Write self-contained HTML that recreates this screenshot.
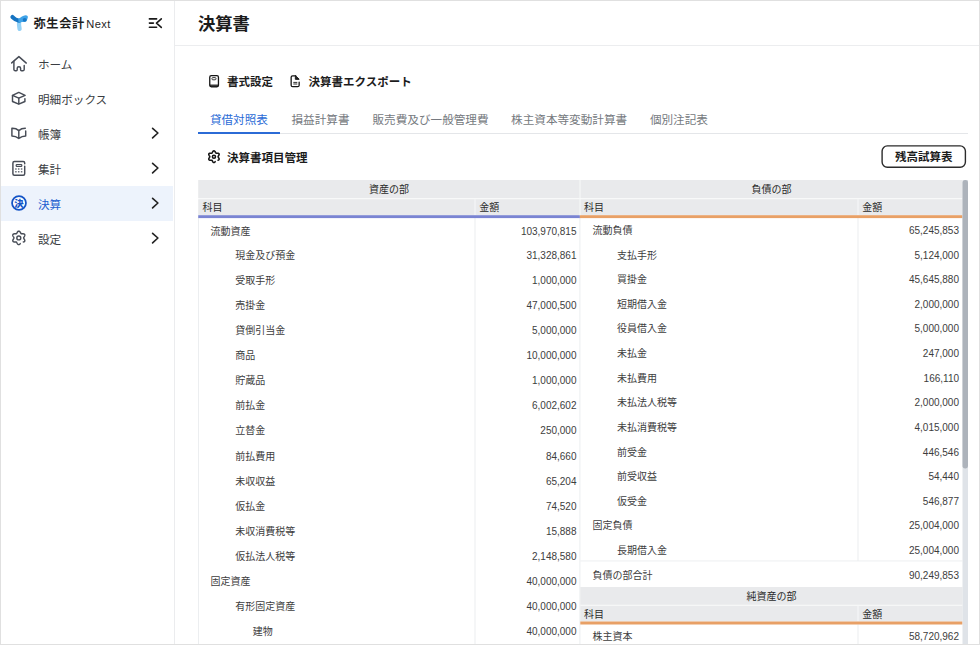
<!DOCTYPE html>
<html lang="ja">
<head>
<meta charset="utf-8">
<title>決算書</title>
<style>
*{box-sizing:border-box;margin:0;padding:0}
html,body{width:980px;height:645px;overflow:hidden;background:#fff}
body{font-family:"Liberation Sans","Noto Sans CJK JP",sans-serif;color:#333;position:relative;font-size:10px}
#frame{position:absolute;left:0;top:0;width:980px;height:645px;border:1px solid #e0e0e0;z-index:50;pointer-events:none}
#side{position:absolute;left:0;top:0;width:175px;height:645px;border-right:1px solid #ebecee;background:#fff}
#logo{position:absolute;left:6px;top:10px;width:28px;height:26px}
#brand{position:absolute;left:33.4px;top:15.2px;font-size:12.2px;font-weight:700;color:#1f1f1f;line-height:18px;white-space:nowrap;letter-spacing:.7px}
#brand span{font-size:11.1px;font-weight:400;letter-spacing:.5px;margin-left:1.2px}
#collapse{position:absolute;left:140px;top:8px;width:30px;height:30px}
.navon{position:absolute;left:1px;top:186px;width:172px;height:34.5px;background:#edf3fc}
.lbl{position:absolute;left:38px;height:18px;line-height:18px;font-size:11.6px;color:#3a3d42;white-space:nowrap}
.lbl.on{color:#1c5fd0}
svg.ic{position:absolute;left:6px;width:28px;height:28px}
svg.ch{position:absolute;left:150px;width:10px;height:14px}
#hdr{position:absolute;left:175px;top:0;width:805px;height:46px;border-bottom:1px solid #ecedef;background:#fff}
#hdr h1{position:absolute;left:23px;top:10.5px;font-size:17.3px;line-height:26px;font-weight:700;color:#1c1c1c;white-space:nowrap}
.tb{position:absolute;top:73px;height:18px;line-height:18px;font-size:11.5px;font-weight:700;color:#1c1c1c;white-space:nowrap}
.tbi{position:absolute}
.tab{position:absolute;top:107.5px;height:26px;line-height:23.5px;font-size:11.62px;color:#767a80;white-space:nowrap;padding:0 11.7px}
.tab.on{color:#2b6bd6;border-bottom:2px solid #2b6bd6;z-index:1}
#tabline{position:absolute;left:198px;top:132.5px;width:770px;height:1px;background:#e4e6e9}
#btn{z-index:2;position:absolute;left:881.4px;top:147px;width:84.6px;height:22.6px;font-size:11.5px;font-weight:700;color:#1c1c1c;text-align:center;line-height:20.4px;white-space:nowrap}
.box{position:absolute;background:#e9ebee}
.ht{position:absolute;font-size:10px;line-height:16px;height:16px;color:#2a2a2a;white-space:nowrap}
#tb{position:absolute;left:0;top:0}
.t{position:absolute;font-size:10px;line-height:16px;height:16px;color:#3d3d3d;white-space:nowrap}
.n{position:absolute;font-size:10px;line-height:16px;height:16px;color:#3d3d3d;white-space:nowrap;text-align:right;width:90px}
</style>
</head>
<body>
<div id="side">
<svg id="logo" viewBox="0 0 28 26"><path d="M13.100 11.200Q12.700 15.500 13.600 18.900" fill="none" stroke="#93d1f6" stroke-width="4.300" stroke-linecap="round"/><path d="M6.500 7.100Q9.200 9.900 13 10.700" fill="none" stroke="#1573c1" stroke-width="4.200" stroke-linecap="round"/><path d="M12.300 8.700C15 7.600 16.900 5.300 19.500 5.300 21.500 5.300 22.300 6.600 21.700 8 21.100 9.600 20.800 11.400 19.500 11.800 17.500 12.400 15 11.700 12.500 12.800Z" fill="#3fa3e8"/><ellipse cx="18.700" cy="9.800" rx="2" ry="1.900" fill="#1777c6"/></svg>
<div id="brand">弥生会計<span>Next</span></div>
<svg id="collapse" viewBox="0 0 30 30" fill="none" stroke="#1a1a1a" stroke-width="1.600" stroke-linecap="round" stroke-linejoin="round"><path d="M9.400 10.900h7.200M9.400 15.100h4M9.400 19.200h7.200M21.300 10.800l-4.800 4.300 4.800 4.300"/></svg>
<div class="lbl" style="top:56px">ホーム</div>
<svg class="ic" style="top:50px" viewBox="0 0 28 28" fill="none" stroke="#474c56" stroke-width="1.450" stroke-linecap="round" stroke-linejoin="round"><path d="M5.700 12.900L12.900 6.600l7.400 6.500"/><path d="M7.900 11.500v8.100q0 1.100 1.100 1.100h1.300q.9 0 .9-.9v-1.600q0-1.500 1.700-1.500t1.700 1.500v1.600q0 .9.900.9h1.600q1.100 0 1.100-1.100v-4.200"/></svg>
<div class="lbl" style="top:91px">明細ボックス</div>
<svg class="ic" style="top:85px" viewBox="0 0 28 28" fill="none" stroke="#474c56" stroke-width="1.450" stroke-linecap="round" stroke-linejoin="round"><path d="M12.800 7.400l6.300 3-6.300 2.800-6.300-2.800z"/><path d="M6.500 10.400v6.100l6.300 2.700 6.100-2.700v-2.900M12.800 13.200v6"/></svg>
<div class="lbl" style="top:126px">帳簿</div>
<svg class="ic" style="top:120px" viewBox="0 0 28 28" fill="none" stroke="#474c56" stroke-width="1.450" stroke-linecap="round" stroke-linejoin="round"><path d="M12.800 10.600c-2-1.800-4.300-2.400-6.900-2.300v7.600q3.700 0 6.900 2.500 3.200-2.500 6.900-2.500V11M12.800 10.600c1.800-1.600 4-2.300 6.500-2.300M12.800 10.600v7.800"/></svg>
<svg class="ch" style="top:126.4px" viewBox="0 0 10 14" fill="none" stroke="#222" stroke-width="1.650" stroke-linecap="round" stroke-linejoin="round"><path d="M2.600 2.300L7.900 7 2.600 11.900"/></svg>
<div class="lbl" style="top:161px">集計</div>
<svg class="ic" style="top:155px" viewBox="0 0 28 28" fill="none" stroke="#474c56" stroke-width="1.450" stroke-linecap="round" stroke-linejoin="round"><path d="M18.700 8.700v-.8q0-1.500-1.500-1.500H8.400q-1.500 0-1.500 1.500v10.800q0 1.500 1.500 1.500h8.800q1.500 0 1.500-1.500v-7.600"/><rect x="10.200" y="9.500" width="5.600" height="1.900" rx=".7" stroke-width="1.200"/><path d="M9.900 14h.01M12.700 14h.01M15.600 14h.01M9.900 16.700h.01M12.700 16.700h.01M15.600 16.700h.01" stroke-width="1.500" stroke="#6b7079" stroke-linecap="square"/></svg>
<svg class="ch" style="top:161.2px" viewBox="0 0 10 14" fill="none" stroke="#222" stroke-width="1.650" stroke-linecap="round" stroke-linejoin="round"><path d="M2.600 2.300L7.900 7 2.600 11.900"/></svg>
<div class="navon"></div>
<div class="lbl on" style="top:196px">決算</div>
<svg class="ic" style="top:190px" viewBox="0 0 28 28"><circle cx="13" cy="13" r="6.950" fill="#fbfdff" stroke="#1454c6" stroke-width="1.750"/><text x="13.050" y="16.500" font-size="9.400" font-weight="900" fill="#1454c6" text-anchor="middle" font-family="'Liberation Sans','Noto Sans CJK JP',sans-serif">決</text></svg>
<svg class="ch" style="top:196.1px" viewBox="0 0 10 14" fill="none" stroke="#222" stroke-width="1.650" stroke-linecap="round" stroke-linejoin="round"><path d="M2.600 2.300L7.900 7 2.600 11.900"/></svg>
<div class="lbl" style="top:231px">設定</div>
<svg class="ic" style="top:225px" viewBox="0 0 28 28" fill="none" stroke="#474c56" stroke-width="1.450" stroke-linecap="round" stroke-linejoin="round"><path d="M14.23 18.62L14.01 18.94L13.75 19.22L13.47 19.44L13.17 19.59L12.85 19.65L12.53 19.62L12.22 19.50L11.93 19.30L11.67 19.03L11.44 18.72L11.24 18.39L11.06 18.07L10.90 17.76L10.75 17.49L10.59 17.28L10.41 17.12L10.20 17.03L9.96 16.98L9.66 16.97L9.33 16.98L8.97 17.00L8.59 17.00L8.20 16.97L7.83 16.89L7.50 16.77L7.21 16.58L6.99 16.34L6.86 16.05L6.80 15.73L6.82 15.38L6.91 15.02L7.06 14.66L7.24 14.32L7.44 14.00L7.63 13.71L7.79 13.44L7.90 13.20L7.95 12.96L7.93 12.73L7.86 12.50L7.72 12.24L7.55 11.96L7.35 11.66L7.16 11.33L6.99 10.98L6.87 10.63L6.80 10.27L6.81 9.93L6.91 9.62L7.08 9.35L7.33 9.13L7.64 8.97L7.99 8.87L8.37 8.81L8.76 8.80L9.13 8.81L9.48 8.83L9.80 8.83L10.07 8.81L10.30 8.74L10.49 8.62L10.66 8.43L10.82 8.20L10.97 7.91L11.14 7.59L11.32 7.26L11.53 6.94L11.78 6.65L12.05 6.41L12.35 6.24L12.67 6.16L12.99 6.17L13.30 6.26L13.60 6.45L13.87 6.69L14.11 6.99L14.31 7.32L14.50 7.65L14.66 7.96L14.81 8.24L14.97 8.47L15.14 8.64L15.34 8.75L15.58 8.81L15.86 8.83L16.18 8.82L16.53 8.81L16.91 8.80L17.30 8.82L17.67 8.88L18.02 9.00L18.32 9.17L18.56 9.39L18.72 9.67L18.79 9.99L18.79 10.33L18.72 10.69L18.58 11.05L18.41 11.39L18.21 11.72L18.02 12.02L17.85 12.29L17.73 12.54L17.66 12.78L17.66 13.01L17.72 13.24L17.84 13.49L18.00 13.76L18.19 14.06L18.39 14.38L18.57 14.72L18.71 15.08L18.79 15.44L18.80 15.79L18.73 16.11L18.57 16.39L18.34 16.62L18.05 16.79L17.70 16.91L17.33 16.98"/><circle cx="12.800" cy="12.900" r="1.950"/></svg>
<svg class="ch" style="top:231.0px" viewBox="0 0 10 14" fill="none" stroke="#222" stroke-width="1.650" stroke-linecap="round" stroke-linejoin="round"><path d="M2.600 2.300L7.900 7 2.600 11.900"/></svg>
</div>
<div id="hdr"><h1>決算書</h1></div>
<svg class="tbi" style="left:200px;top:68px;width:30px;height:30px" viewBox="0 0 30 30" fill="none" stroke="#151515" stroke-width="1.300" stroke-linejoin="round"><path d="M9.750 16.400h8.700v1.300q0 1.200-1.300 1.200h-6.100q-1.300 0-1.300-1.200z" fill="#3c3c3c" stroke="none"/><rect x="9.750" y="7.650" width="8.700" height="11.200" rx="1.500"/><rect x="11.900" y="9.600" width="4.100" height="2.200" rx="1" stroke-width="1" stroke="#3a3a3a"/></svg>
<div class="tb" style="left:227px">書式設定</div>
<svg class="tbi" style="left:281px;top:68px;width:30px;height:30px" viewBox="0 0 30 30" fill="none" stroke="#151515" stroke-width="1.300" stroke-linejoin="round" stroke-linecap="round"><path d="M14.800 7.850h-3.150q-1.500 0-1.500 1.500v7.800q0 1.500 1.500 1.500h5q1.500 0 1.500-1.500v-3"/><path d="M14.700 7.900l3.500 3.400h-3.500z" fill="#222" stroke-width="1"/><path d="M12.300 14.400h4M12.300 16h4" stroke-width="1" stroke="#333" stroke-linecap="butt"/></svg>
<div class="tb" style="left:308.500px">決算書エクスポート</div>
<div class="tab on" style="left:198.2px">貸借対照表</div>
<div class="tab" style="left:279.8px">損益計算書</div>
<div class="tab" style="left:360.8px">販売費及び一般管理費</div>
<div class="tab" style="left:499.4px">株主資本等変動計算書</div>
<div class="tab" style="left:638.2px">個別注記表</div>
<div id="tabline"></div>
<svg class="tbi" style="left:200px;top:143px;width:30px;height:30px" viewBox="0 0 30 30" fill="none" stroke="#151515" stroke-width="1.550" stroke-linejoin="round" stroke-linecap="round"><path d="M15.18 18.64L14.99 18.92L14.78 19.17L14.54 19.36L14.27 19.49L14.00 19.55L13.73 19.52L13.46 19.42L13.21 19.25L12.98 19.01L12.79 18.74L12.61 18.45L12.47 18.16L12.33 17.89L12.21 17.66L12.07 17.46L11.92 17.33L11.75 17.24L11.54 17.20L11.29 17.19L11.01 17.20L10.70 17.23L10.36 17.24L10.03 17.22L9.70 17.17L9.40 17.07L9.14 16.92L8.95 16.72L8.81 16.48L8.76 16.20L8.77 15.90L8.84 15.59L8.97 15.28L9.13 14.98L9.30 14.70L9.48 14.45L9.62 14.22L9.73 14.00L9.79 13.80L9.79 13.61L9.74 13.41L9.63 13.19L9.48 12.96L9.31 12.71L9.13 12.43L8.97 12.13L8.84 11.82L8.77 11.51L8.75 11.21L8.81 10.93L8.94 10.69L9.14 10.49L9.39 10.34L9.69 10.24L10.01 10.18L10.35 10.16L10.68 10.17L11.00 10.19L11.28 10.21L11.53 10.21L11.74 10.16L11.92 10.08L12.07 9.94L12.20 9.75L12.33 9.52L12.46 9.25L12.61 8.96L12.78 8.67L12.98 8.39L13.20 8.16L13.45 7.99L13.72 7.88L13.99 7.85L14.26 7.90L14.53 8.03L14.77 8.23L14.99 8.47L15.17 8.75L15.34 9.04L15.48 9.33L15.61 9.59L15.74 9.81L15.87 9.99L16.03 10.11L16.22 10.18L16.44 10.21L16.70 10.21L16.99 10.19L17.31 10.17L17.65 10.17L17.98 10.19L18.30 10.26L18.59 10.38L18.83 10.54L19.01 10.76L19.11 11.01L19.15 11.30L19.12 11.60L19.02 11.91L18.88 12.22L18.72 12.51L18.54 12.78L18.37 13.03L18.23 13.26L18.14 13.47L18.10 13.66L18.12 13.86L18.19 14.06L18.32 14.28L18.47 14.52L18.65 14.79L18.82 15.07L18.98 15.37L19.09 15.68L19.14 15.99L19.13 16.29L19.05 16.55L18.90 16.78L18.69 16.97L18.42 17.10L18.11 17.19"/><circle cx="13.950" cy="13.700" r="1.550"/></svg>
<div class="tb" style="left:227px;top:148.600px">決算書項目管理</div>
<div id="btn">残高試算表</div>
<svg id="tb" width="980" height="645" viewBox="0 0 980 645"><rect x="198.00" y="218.00" width="1.00" height="427.00" fill="#eceef0"/><rect x="474.50" y="218.00" width="1.00" height="427.00" fill="#eceef0"/><rect x="579.40" y="218.00" width="1.00" height="427.00" fill="#eceef0"/><rect x="857.50" y="218.00" width="1.00" height="343.00" fill="#eceef0"/><rect x="857.50" y="624.50" width="1.00" height="21.00" fill="#eceef0"/><rect x="198.20" y="180.00" width="381.70" height="18.30" fill="#e9eaec"/><rect x="198.20" y="199.20" width="381.70" height="16.00" fill="#e9eaec"/><rect x="474.50" y="199.20" width="1.00" height="16.00" fill="#f7f8f9"/><rect x="198.20" y="215.20" width="381.70" height="2.90" fill="#7a84d2"/><rect x="580.30" y="180.00" width="382.20" height="18.30" fill="#e9eaec"/><rect x="580.30" y="199.20" width="382.20" height="16.00" fill="#e9eaec"/><rect x="857.50" y="199.20" width="1.00" height="16.00" fill="#f7f8f9"/><rect x="579.90" y="215.20" width="382.60" height="2.90" fill="#e8a066"/><rect x="579.50" y="180.00" width="0.80" height="35.20" fill="#f6f7f8"/><rect x="580.30" y="560.50" width="382.20" height="0.90" fill="#eceef0"/><rect x="580.30" y="587.00" width="382.20" height="17.80" fill="#e9eaec"/><rect x="580.30" y="605.60" width="382.20" height="15.90" fill="#e9eaec"/><rect x="857.50" y="605.60" width="1.00" height="15.90" fill="#f7f8f9"/><rect x="580.30" y="621.50" width="382.20" height="3.00" fill="#e8a066"/><rect x="882.100" y="145.900" width="83.300" height="21.300" rx="5.200" fill="#fff" stroke="#2b2b2b" stroke-width="1.400"/><rect x="962.50" y="180.00" width="5.50" height="465.00" fill="#dfe3e8"/><rect x="962.50" y="180.00" width="5.50" height="288.50" fill="#adb3bb" rx="2.700"/></svg>
<div class="ht" style="left:198.2px;width:381.7px;text-align:center;top:182px">資産の部</div>
<div class="ht" style="left:202.6px;top:200px">科目</div>
<div class="ht" style="left:479.3px;top:200px">金額</div>
<div class="ht" style="left:580.3px;width:382.2px;text-align:center;top:182px">負債の部</div>
<div class="ht" style="left:584.0px;top:200px">科目</div>
<div class="ht" style="left:862.3px;top:200px">金額</div>
<div class="t" style="left:210.6px;top:224px">流動資産</div>
<div class="n" style="left:486.5px;top:224px">103,970,815</div>
<div class="t" style="left:235.2px;top:248px">現金及び預金</div>
<div class="n" style="left:486.5px;top:248px">31,328,861</div>
<div class="t" style="left:235.2px;top:273px">受取手形</div>
<div class="n" style="left:486.5px;top:273px">1,000,000</div>
<div class="t" style="left:235.2px;top:298px">売掛金</div>
<div class="n" style="left:486.5px;top:298px">47,000,500</div>
<div class="t" style="left:235.2px;top:323px">貸倒引当金</div>
<div class="n" style="left:486.5px;top:323px">5,000,000</div>
<div class="t" style="left:235.2px;top:348px">商品</div>
<div class="n" style="left:486.5px;top:348px">10,000,000</div>
<div class="t" style="left:235.2px;top:373px">貯蔵品</div>
<div class="n" style="left:486.5px;top:373px">1,000,000</div>
<div class="t" style="left:235.2px;top:398px">前払金</div>
<div class="n" style="left:486.5px;top:398px">6,002,602</div>
<div class="t" style="left:235.2px;top:423px">立替金</div>
<div class="n" style="left:486.5px;top:423px">250,000</div>
<div class="t" style="left:235.2px;top:449px">前払費用</div>
<div class="n" style="left:486.5px;top:449px">84,660</div>
<div class="t" style="left:235.2px;top:474px">未収収益</div>
<div class="n" style="left:486.5px;top:474px">65,204</div>
<div class="t" style="left:235.2px;top:499px">仮払金</div>
<div class="n" style="left:486.5px;top:499px">74,520</div>
<div class="t" style="left:235.2px;top:524px">未収消費税等</div>
<div class="n" style="left:486.5px;top:524px">15,888</div>
<div class="t" style="left:235.2px;top:549px">仮払法人税等</div>
<div class="n" style="left:486.5px;top:549px">2,148,580</div>
<div class="t" style="left:210.6px;top:574px">固定資産</div>
<div class="n" style="left:486.5px;top:574px">40,000,000</div>
<div class="t" style="left:235.2px;top:599px">有形固定資産</div>
<div class="n" style="left:486.5px;top:599px">40,000,000</div>
<div class="t" style="left:252.7px;top:624px">建物</div>
<div class="n" style="left:486.5px;top:624px">40,000,000</div>
<div class="t" style="left:592.4px;top:223px">流動負債</div>
<div class="n" style="left:869.0px;top:223px">65,245,853</div>
<div class="t" style="left:617.0px;top:248px">支払手形</div>
<div class="n" style="left:869.0px;top:248px">5,124,000</div>
<div class="t" style="left:617.0px;top:272px">買掛金</div>
<div class="n" style="left:869.0px;top:272px">45,645,880</div>
<div class="t" style="left:617.0px;top:297px">短期借入金</div>
<div class="n" style="left:869.0px;top:297px">2,000,000</div>
<div class="t" style="left:617.0px;top:321px">役員借入金</div>
<div class="n" style="left:869.0px;top:321px">5,000,000</div>
<div class="t" style="left:617.0px;top:346px">未払金</div>
<div class="n" style="left:869.0px;top:346px">247,000</div>
<div class="t" style="left:617.0px;top:371px">未払費用</div>
<div class="n" style="left:869.0px;top:371px">166,110</div>
<div class="t" style="left:617.0px;top:395px">未払法人税等</div>
<div class="n" style="left:869.0px;top:395px">2,000,000</div>
<div class="t" style="left:617.0px;top:420px">未払消費税等</div>
<div class="n" style="left:869.0px;top:420px">4,015,000</div>
<div class="t" style="left:617.0px;top:445px">前受金</div>
<div class="n" style="left:869.0px;top:445px">446,546</div>
<div class="t" style="left:617.0px;top:469px">前受収益</div>
<div class="n" style="left:869.0px;top:469px">54,440</div>
<div class="t" style="left:617.0px;top:494px">仮受金</div>
<div class="n" style="left:869.0px;top:494px">546,877</div>
<div class="t" style="left:592.4px;top:518px">固定負債</div>
<div class="n" style="left:869.0px;top:518px">25,004,000</div>
<div class="t" style="left:617.0px;top:543px">長期借入金</div>
<div class="n" style="left:869.0px;top:543px">25,004,000</div>
<div class="t" style="left:592.4px;top:568px">負債の部合計</div>
<div class="n" style="left:869.0px;top:568px">90,249,853</div>
<div class="ht" style="left:580.3px;width:382.2px;text-align:center;top:589px">純資産の部</div>
<div class="ht" style="left:584.0px;top:607px">科目</div>
<div class="ht" style="left:862.3px;top:607px">金額</div>
<div class="t" style="left:592.4px;top:629px">株主資本</div>
<div class="n" style="left:869.0px;top:629px">58,720,962</div>
<div id="frame"></div>
</body>
</html>
